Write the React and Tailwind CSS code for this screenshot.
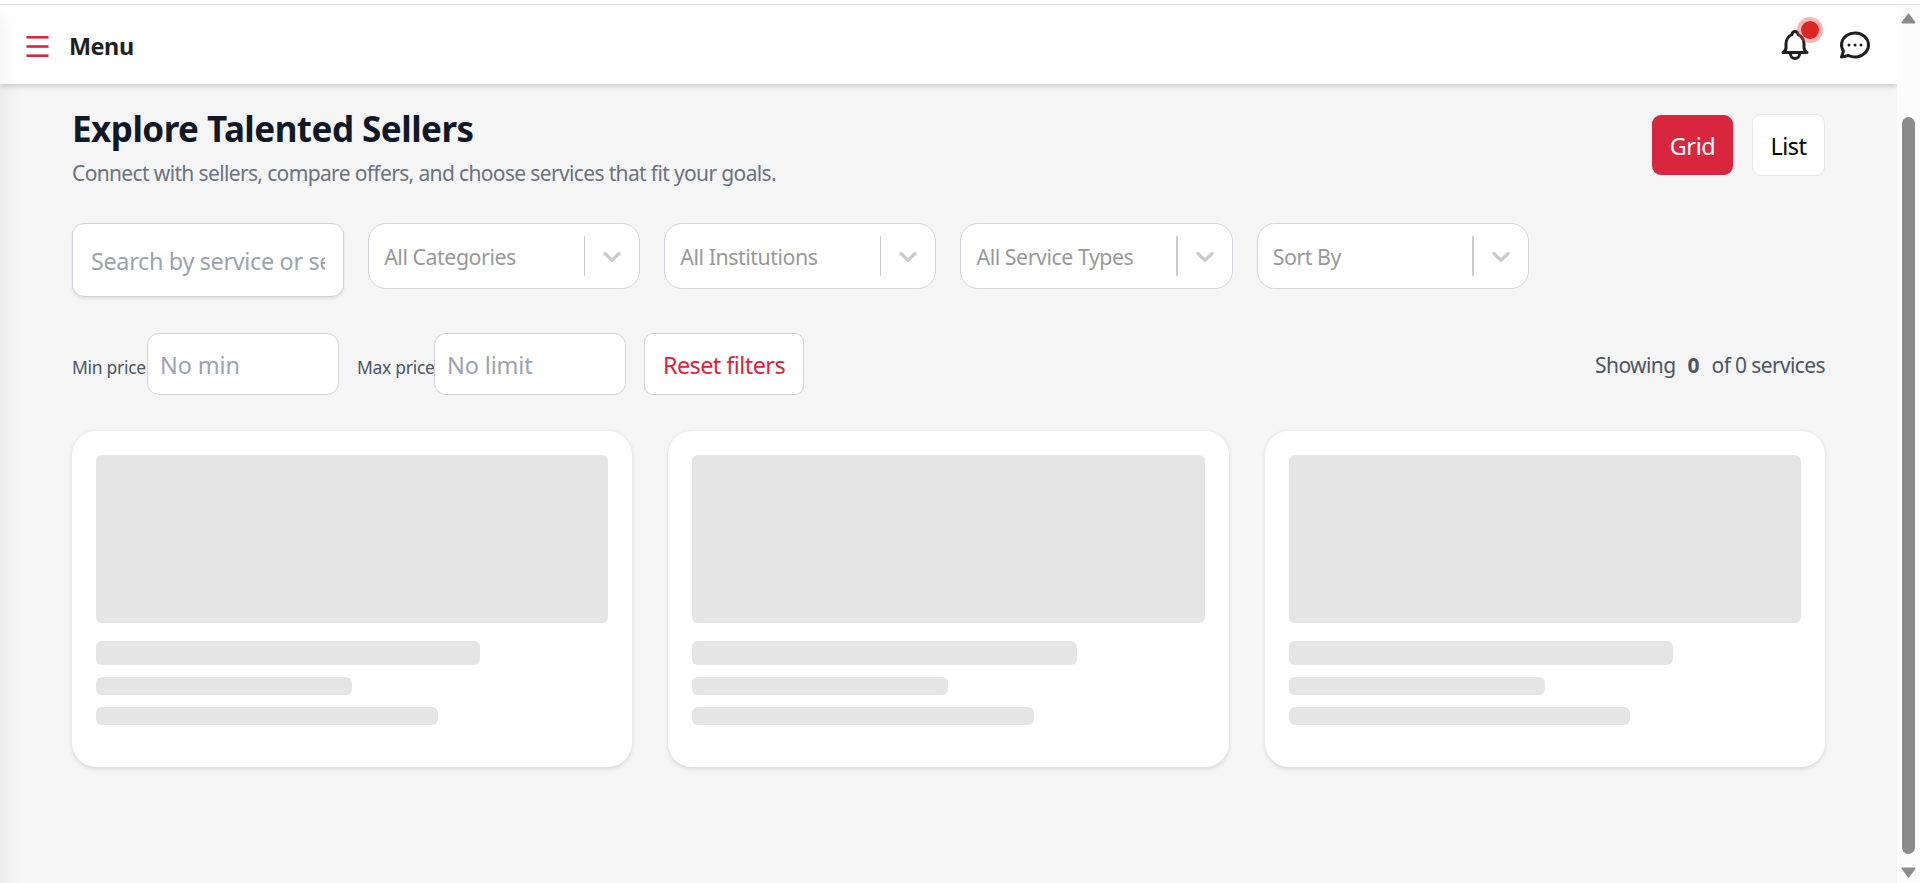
import { TbBell } from "react-icons/tb";

const RED = "#d7263d";

function MenuIcon() {
  return (
    <svg width="24" height="24" viewBox="0 0 24 24" fill={RED} className="block shrink-0">
      <rect x="0.5" y="2" width="22" height="2.6" />
      <rect x="0.5" y="11.2" width="22" height="2.6" />
      <rect x="0.5" y="20.4" width="22" height="2.6" />
    </svg>
  );
}

function MessageIcon() {
  return (
    <svg
      width="36"
      height="36"
      viewBox="0 0 24 24"
      fill="none"
      stroke="currentColor"
      strokeWidth="2"
      strokeLinecap="round"
      strokeLinejoin="round"
      className="block"
    >
      <path d="M3 20l1.3 -3.9c-2.324 -3.437 -1.426 -7.872 2.1 -10.374c3.526 -2.501 8.59 -2.296 11.845 .48c3.255 2.777 3.695 7.266 1.029 10.501c-2.666 3.235 -7.615 4.215 -11.574 2.293l-4.7 1" />
      <path d="M12 12v.01M8 12v.01M16 12v.01" />
    </svg>
  );
}

function Header() {
  return (
    <header className="relative z-10 flex h-[79px] shrink-0 items-center justify-between bg-white pr-6 pl-[26px] shadow-[0_2px_6px_rgba(0,0,0,0.18)]">
      <div className="flex items-center gap-[19px] pt-0.5">
        <MenuIcon />
        <span className="text-[23.4px] leading-9 font-bold tracking-[-0.45px] text-[#1f1f1f]">Menu</span>
      </div>
      <div className="flex items-center gap-6 text-[#1f1f1f]">
        <div className="relative">
          <TbBell size={36} className="block" />
          <span className="absolute -top-[10px] left-[20px] size-[26px] rounded-full bg-[#ef4444]/40" />
          <span className="absolute -top-[6px] left-[24px] size-[18px] rounded-full bg-[#dc2626]" />
        </div>
        <MessageIcon />
      </div>
    </header>
  );
}

function FilterSelect({ label }) {
  return (
    <div className="flex h-[66px] items-center rounded-[18px] border border-[#d1d5db] bg-white">
      <span className="flex-1 pt-0.5 pl-[15px] text-[21.4px] leading-8 tracking-[-0.48px] whitespace-nowrap text-[#999999]">
        {label}
      </span>
      <span className="h-10 w-[1.5px] bg-[#cccccc]" />
      <span className="flex w-[54px] justify-center">
        <svg width="30" height="30" viewBox="0 0 20 20" fill="#cccccc">
          <path d="M4.516 7.548c0.436-0.446 1.043-0.481 1.576 0l3.908 3.747 3.908-3.747c0.533-0.481 1.141-0.446 1.574 0 0.436 0.445 0.408 1.197 0 1.615-0.406 0.418-4.695 4.502-4.695 4.502-0.217 0.223-0.502 0.335-0.787 0.335s-0.57-0.112-0.789-0.335c0 0-4.287-4.084-4.695-4.502s-0.436-1.17 0-1.615z" />
        </svg>
      </span>
    </div>
  );
}

function PriceField({ label, placeholder, labelClass }) {
  return (
    <label className="flex items-center">
      <span className={`pt-1.5 text-[17.5px] leading-7 tracking-[-0.3px] whitespace-nowrap text-[#4b5563] ${labelClass}`}>
        {label}
      </span>
      <input
        placeholder={placeholder}
        className="h-[62px] w-48 rounded-xl border border-[#d1d5db] bg-white px-3 pt-0.5 text-[23.4px] tracking-[-0.1px] text-[#4b5563] placeholder:text-[#9ca3af]"
      />
    </label>
  );
}

function SkeletonCard() {
  return (
    <div className="h-[336px] rounded-3xl bg-white p-6 shadow-[0_1.5px_4px_rgba(0,0,0,0.12)]">
      <div className="h-[168px] rounded-md bg-[#e5e5e5]" />
      <div className="mt-[18px] h-6 w-3/4 rounded-md bg-[#e5e5e5]" />
      <div className="mt-3 h-[18px] w-1/2 rounded-md bg-[#e5e5e5]" />
      <div className="mt-3 h-[18px] w-2/3 rounded-md bg-[#e5e5e5]" />
    </div>
  );
}

function Scrollbar() {
  return (
    <div className="flex w-[23px] shrink-0 flex-col items-center bg-[#fcfcfc] pt-2 pb-[5px]">
      <svg width="15" height="11" viewBox="0 0 15 11" fill="#8b8b8b" stroke="#8b8b8b" strokeWidth="2" strokeLinejoin="round">
        <path d="M7.5 1.5L13.5 9.5H1.5Z" />
      </svg>
      <div className="mt-[93px] w-[13px] flex-1 rounded-full bg-[#8b8b8b]" />
      <svg width="15" height="11" viewBox="0 0 15 11" fill="#8b8b8b" stroke="#8b8b8b" strokeWidth="2" strokeLinejoin="round" className="mt-[13px]">
        <path d="M7.5 9.5L13.5 1.5H1.5Z" />
      </svg>
    </div>
  );
}

export default function App() {
  return (
    <div className="flex h-[883px] flex-col overflow-hidden bg-white font-['Noto_Sans','Open_Sans',sans-serif]">
      <div className="h-[5px] shrink-0 border-b border-[#dcdcdc]" />
      <div className="flex min-h-0 flex-1">
        <div className="relative flex min-w-0 flex-1 flex-col overflow-hidden bg-[#f5f5f5]">
          <Header />
          <div className="absolute top-3 -bottom-10 -left-4 z-20 w-4 shadow-[0_0_22px_rgba(0,0,0,0.09)]" />
          <main className="px-[72px] pt-6">
            <div className="flex items-start justify-between">
              <div>
                <h1 className="text-[35px] leading-[42px] font-bold tracking-[-0.52px] text-[#111827]">
                  Explore Talented Sellers
                </h1>
                <p className="mt-2 text-[21px] leading-[30px] tracking-[-0.64px] text-[#6b7280]">
                  Connect with sellers, compare offers, and choose services that fit your goals.
                </p>
              </div>
              <div className="flex gap-[19px] pt-1.5">
                <button className="mt-px h-[60px] w-[81px] rounded-[9px] bg-[#d7263d] pt-[3px] text-[23.4px] tracking-[-0.35px] text-white">
                  Grid
                </button>
                <button className="h-[62px] w-[73px] rounded-[9px] border border-[#e5e7eb] bg-white pt-[3px] text-[23.4px] tracking-[-0.45px] text-black">
                  List
                </button>
              </div>
            </div>

            <div className="mt-[35px] grid grid-cols-6 items-start gap-6">
              <input
                placeholder="Search by service or seller"
                className="h-[74px] w-full rounded-xl border border-[#d1d5db] bg-white px-[18px] pt-0.5 text-[23.4px] tracking-[-0.33px] shadow-[0_1.5px_3px_rgba(0,0,0,0.08)] placeholder:text-[#9ca3af]"
              />
              <FilterSelect label="All Categories" />
              <FilterSelect label="All Institutions" />
              <FilterSelect label="All Service Types" />
              <FilterSelect label="Sort By" />
            </div>

            <div className="mt-9 flex items-center justify-between">
              <div className="flex items-center gap-[18px]">
                <PriceField label="Min price" placeholder="No min" labelClass="w-[75px]" />
                <PriceField label="Max price" placeholder="No limit" labelClass="w-[77px]" />
                <button className="h-[62px] w-40 rounded-[9px] border border-[#d1d5db] bg-white pt-[3px] text-[23.4px] tracking-[-0.55px] whitespace-nowrap text-[#d7263d]">
                  Reset filters
                </button>
              </div>
              <p className="flex pt-0.5 text-[21px] leading-[30px] text-[#4b5563]">
                <span className="tracking-[-0.6px]">Showing</span>
                <b className="mx-3 font-bold">0</b>
                <span className="tracking-[-0.62px]">of 0 services</span>
              </p>
            </div>

            <div className="mt-9 grid grid-cols-3 gap-9">
              <SkeletonCard />
              <SkeletonCard />
              <SkeletonCard />
            </div>
          </main>
        </div>
        <Scrollbar />
      </div>
    </div>
  );
}
